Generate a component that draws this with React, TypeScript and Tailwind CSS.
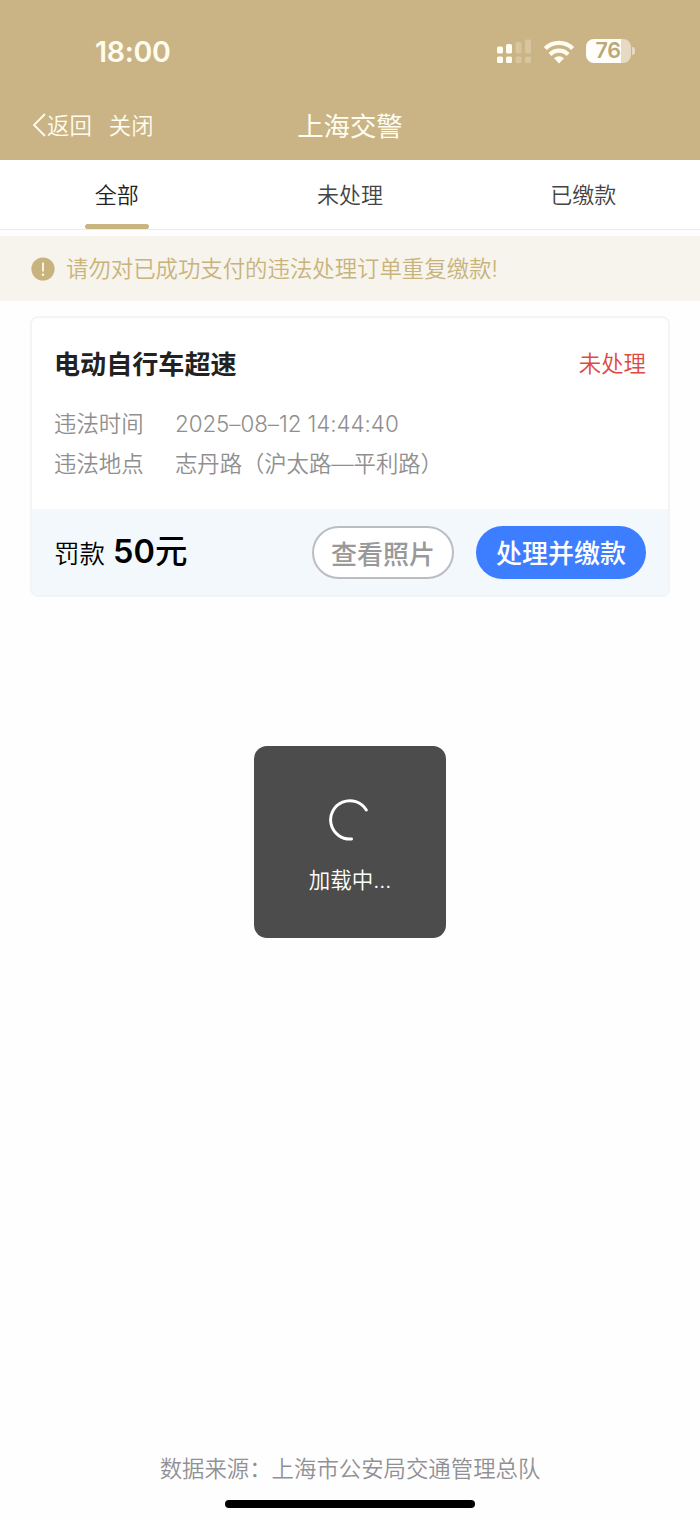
const TABS = ["全部", "未处理", "已缴款"];

const DETAILS = [
  { label: "违法时间", value: "2025–08–12 14:44:40" },
  { label: "违法地点", value: "志丹路（沪太路—平利路）" },
];

function StatusBar() {
  return (
    <div className="flex h-[90px] items-center justify-between pt-[14px] pr-[65px] pl-[95px] text-[#fffdf0]">
      <span className="font-[Inter,sans-serif] text-[28.5px] leading-none font-semibold tracking-[-0.3px]">
        18:00
      </span>
      <div className="flex items-center">
        {/* Dual SIM signal */}
        <svg width="36" height="26" viewBox="0 0 36 26" fill="currentColor" className="mr-[11px]">
          <rect x="1" y="7.500" width="6" height="7" rx="1.5" />
          <rect x="10" y="5" width="6" height="9.500" rx="1.5" />
          <g opacity=".24">
            <rect x="19.500" y="3" width="6" height="11.500" rx="1.5" />
            <rect x="29" y="0.500" width="6" height="14" rx="1.5" />
            <rect x="19.500" y="17.500" width="6" height="6.500" rx="1.5" />
            <rect x="29" y="17.500" width="6" height="6.500" rx="1.5" />
          </g>
          <rect x="1" y="17.500" width="6" height="6.500" rx="1.5" />
          <rect x="10" y="17.500" width="6" height="6.500" rx="1.5" />
        </svg>
        {/* Wifi */}
        <svg width="32" height="24" viewBox="0 0 32 24" fill="none" stroke="currentColor" strokeWidth="4.300" className="mr-[11px]">
          <path d="M2.300 8.500a19.400 19.400 0 0 1 27.400 0" />
          <path d="M7 14.400a12.700 12.700 0 0 1 18 0" />
          <path d="M16 23.400l-5-5.100a7.200 7.200 0 0 1 10 0z" fill="currentColor" stroke="none" />
        </svg>
        {/* Battery */}
        <div className="-mt-[2px] flex items-center gap-[1px]">
          <div className="flex h-6 w-[45px] items-center justify-center rounded-[8px] bg-linear-to-r from-[#fffefa] from-[77%] to-[#e6dac3] to-[77%] pr-px font-[Inter,sans-serif] text-[21.5px] leading-none font-semibold tracking-[-0.3px] text-[#bba778]">
            76
          </div>
          <div className="h-2 w-[3px] rounded-r-full bg-[#e6dac3]" />
        </div>
      </div>
    </div>
  );
}

function NavBar() {
  return (
    <div className="grid h-[70px] grid-cols-3 items-center text-[#fffdf0]">
      <div className="flex items-center pl-[32px] text-[22.4px] leading-none font-[350]">
        <svg width="15" height="26" viewBox="0 0 15 26" fill="none" stroke="currentColor" strokeWidth="1.8">
          <path d="M13 2L2 13l11 11" />
        </svg>
        <span className="pt-[2px]">返回</span>
        <span className="ml-[17px] pt-[2px]">关闭</span>
      </div>
      <h1 className="pt-[2px] text-center text-[26.4px] leading-none">上海交警</h1>
    </div>
  );
}

function Tabs() {
  return (
    <div className="grid h-[70px] grid-cols-3 border-b border-[#ebebee] bg-white text-[22px] font-[350]">
      {TABS.map((tab, i) => (
        <div
          key={tab}
          className={
            i === 0
              ? "flex flex-col items-center justify-between text-[#222]"
              : "flex flex-col items-center justify-between text-[#444]"
          }
        >
          <span className="pt-[18px] leading-[34px]">{tab}</span>
          {i === 0 && <span className="h-[5px] w-16 rounded-full bg-[#c9b580]" />}
        </div>
      ))}
    </div>
  );
}

function Notice() {
  return (
    <div className="mt-[6px] flex h-[65px] items-center bg-[#f7f3ed] pl-[31px] text-[22.4px] font-[350] text-[#c8b37b]">
      <svg width="24" height="24" viewBox="0 0 24 24" className="mr-[11px]">
        <circle cx="12" cy="12" r="11.600" fill="#c8b37f" />
        <path d="M12 5.500v9" stroke="#fffbe8" strokeWidth="1.800" />
        <circle cx="12" cy="17.700" r="1.200" fill="#fffbe8" />
      </svg>
      <span className="pt-px leading-none">请勿对已成功支付的违法处理订单重复缴款!</span>
    </div>
  );
}

function ViolationCard() {
  return (
    <section className="mx-[30px] mt-[15px] h-[281px] overflow-hidden rounded-[8px] border-2 border-[#f3f4f5] bg-white">
      <div className="h-[191px] px-[22px] pt-[26px]">
        <div className="flex h-10 items-center justify-between">
          <h2 className="pt-[3px] text-[26.1px] leading-none font-bold text-[#222]">电动自行车超速</h2>
          <span className="text-[22.4px] leading-none font-[350] text-[#dd4a42]">未处理</span>
        </div>
        <dl className="mt-5 text-[22.4px] leading-10 font-[350] text-[#8f8f8f]">
          {DETAILS.map((item) => (
            <div key={item.label} className="flex">
              <dt className="w-[121px]">{item.label}</dt>
              <dd className="tracking-[-0.07px]">{item.value}</dd>
            </div>
          ))}
        </dl>
      </div>
      <div className="flex h-[86px] items-center bg-[#f3f8fd] px-[22px]">
        <div className="flex flex-1 items-baseline text-black">
          <span className="text-[25.5px] leading-none font-[350]">罚款</span>
          <strong className="ml-2 text-[32.5px] leading-none font-semibold">
            50<span className="font-medium">元</span>
          </strong>
        </div>
        <button className="h-[53px] w-[142px] rounded-full border-2 border-[#bbbdc3] bg-white pt-[5px] text-[26px] leading-none font-medium text-[#999]">
          查看照片
        </button>
        <button className="ml-[22px] h-[53px] w-[170px] rounded-full bg-[#3c7eff] pt-[3px] text-[26px] leading-none font-medium text-white">
          处理并缴款
        </button>
      </div>
    </section>
  );
}

function LoadingToast() {
  return (
    <div className="absolute top-[746px] left-[254px] flex h-[192px] w-[192px] flex-col items-center rounded-[13px] bg-[#4c4c4c] pt-[52px] text-white">
      <svg width="44" height="44" viewBox="0 0 44 44" fill="none" stroke="currentColor" strokeWidth="3" strokeLinecap="round">
        <path d="M38.300 12A19.200 19.200 0 1 0 23.500 41" />
      </svg>
      <span className="mt-[21px] text-[21.500px] leading-[34px] font-[350]">加载中...</span>
    </div>
  );
}

export default function App() {
  return (
    <div className="relative flex h-[1521px] w-[700px] flex-col overflow-hidden bg-[#fefefe] font-[Inter,'Noto_Sans_CJK_SC',sans-serif]">
      <header className="bg-[#cab485]">
        <StatusBar />
        <NavBar />
      </header>
      <Tabs />
      <Notice />
      <ViolationCard />
      <footer className="mt-auto flex flex-col items-center pb-[13px]">
        <p className="text-[22.4px] leading-[34px] font-[350] text-[#919195]">
          数据来源：上海市公安局交通管理总队
        </p>
        <div className="mt-[14px] h-2 w-[250px] rounded-full bg-black" />
      </footer>
      <LoadingToast />
    </div>
  );
}
